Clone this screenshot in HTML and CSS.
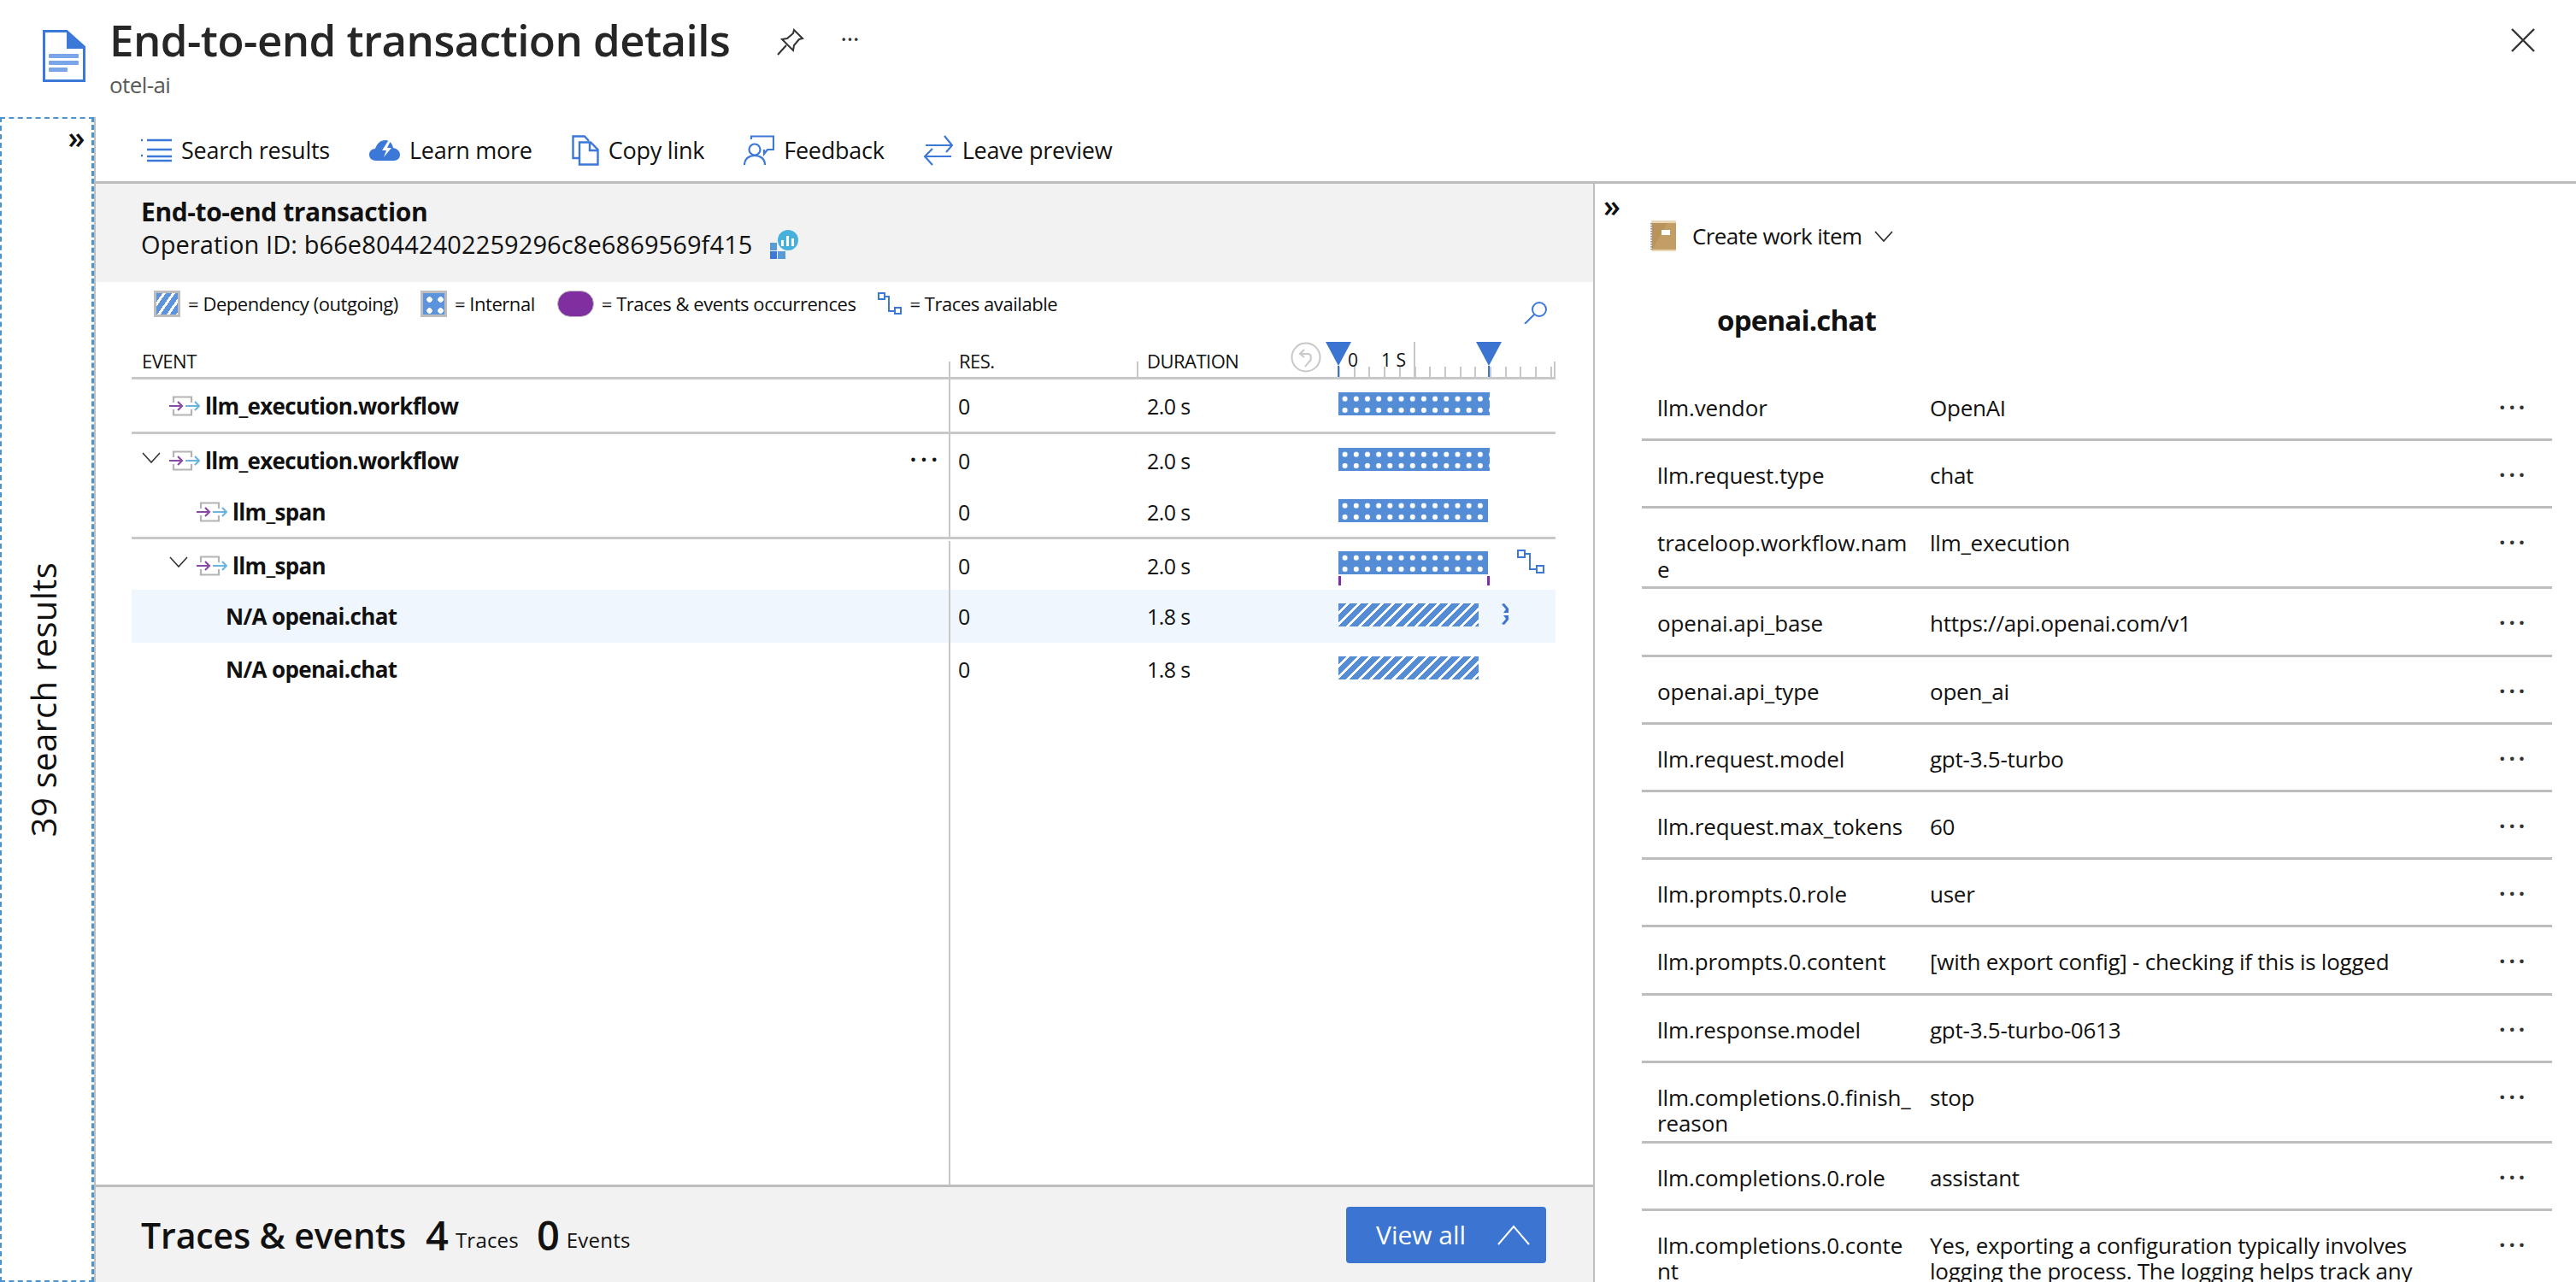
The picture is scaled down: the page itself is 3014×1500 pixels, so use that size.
FILE: index.html
```html
<!DOCTYPE html>
<html lang="en">
<head>
  <meta charset="UTF-8" />
  <title>End-to-end transaction details</title>
  <link rel="stylesheet" href="styles.css">
</head>
<body>
  <header class="blade-head">
    <svg class="doc-icon" width="50" height="61" viewBox="0 0 50 61">
      <path d="M1.5 1.5H28L48.5 20V59.5H1.5Z" fill="#fff" stroke="#3b78d8" stroke-width="3"/>
      <path d="M28 1.5L48.5 20V22H28Z" fill="#3b78d8"/>
      <rect x="7" y="28" width="35" height="5" rx="1" fill="#7aa5e8"/>
      <rect x="7" y="36" width="35" height="5" rx="1" fill="#7aa5e8"/>
      <rect x="7" y="44" width="22" height="5" rx="1" fill="#7aa5e8"/>
    </svg>
    <div class="blade-titles">
      <h1>End-to-end transaction details</h1>
      <p>otel-ai</p>
    </div>
    <svg class="pin-icon" width="32" height="32" viewBox="0 0 32 32" fill="none" stroke="#333" stroke-width="2">
      <path d="M20 2L30 12L26 13L20 20L19 26L6 13L12 12L19 6Z"/>
      <path d="M11 20L1 31"/>
    </svg>
    <span class="head-more">&middot;&middot;&middot;</span>
    <svg class="close-icon" width="30" height="30" viewBox="0 0 30 30" stroke="#333" stroke-width="2.4">
      <path d="M2 2L28 28M28 2L2 28"/>
    </svg>
  </header>

  <div class="blade-body">
    <aside class="results-rail">
      <span class="rail-toggle">&raquo;</span>
      <span class="rail-label">39 search results</span>
    </aside>

    <div class="blade-main">
      <nav class="toolbar">
        <a class="tool">
          <svg width="36" height="28" viewBox="0 0 36 28" fill="none" stroke="#3b78d8" stroke-width="2.4">
            <path d="M7 2H36M7 13H36M7 21H36M7 26H36"/>
            <path d="M0 2H2M0 20H2"/>
          </svg>
          Search results
        </a>
        <a class="tool">
          <svg width="36" height="26" viewBox="0 0 36 26">
            <path d="M8 25C2 25 0 21 0 18C0 14 3 11 7 11C9 5 13 1 19 1C24 1 27 5 28 10C33 11 36 14 36 18C36 22 33 25 29 25Z" fill="#3b78d8"/>
            <path d="M22 2L15 13H20L17 21L26 10H21L25 2Z" fill="#fff"/>
          </svg>
          Learn more
        </a>
        <a class="tool">
          <svg width="32" height="36" viewBox="0 0 32 36" fill="none" stroke="#3b78d8" stroke-width="2.4">
            <path d="M8 27H1.5V1.500H15L20 7"/>
            <path d="M9 8.500H22L30.500 17V34.500H9Z"/>
            <path d="M21 9V18H30"/>
          </svg>
          Copy link
        </a>
        <a class="tool">
          <svg width="36" height="36" viewBox="0 0 36 36" fill="none" stroke="#3b78d8" stroke-width="2.2">
            <path d="M9 5V1.500H35V17H28L24 22V17"/>
            <circle cx="13" cy="17" r="6.500"/>
            <path d="M1 35C1 28 6 24 13 24C20 24 25 28 25 35"/>
          </svg>
          Feedback
        </a>
        <a class="tool">
          <svg width="34" height="36" viewBox="0 0 34 36" fill="none" stroke="#3b78d8" stroke-width="2.2">
            <path d="M2 12H32M24 1L33 12L26 20"/>
            <path d="M32 25H2M10 16L1 25L10 35"/>
          </svg>
          Leave preview
        </a>
      </nav>

      <div class="split">
        <section class="txn-pane">
          <div class="txn-head">
            <h2>End-to-end transaction</h2>
            <div class="op-id">
              Operation ID: b66e80442402259296c8e6869569f415
              <svg width="34" height="34" viewBox="0 0 34 34">
                <rect x="0" y="15" width="8" height="9" fill="#5b9bd5"/>
                <rect x="0" y="25" width="8" height="9" fill="#3b78d8"/>
                <rect x="9" y="25" width="9" height="9" fill="#5b9bd5"/>
                <circle cx="21" cy="12" r="12" fill="#46b1dc"/>
                <rect x="13" y="12" width="3" height="7" fill="#fff"/>
                <rect x="19" y="7" width="3" height="12" fill="#fff"/>
                <rect x="25" y="10" width="3" height="9" fill="#fff"/>
              </svg>
            </div>
          </div>

          <div class="legend">
            <span class="swatch swatch-dep"></span>
            <span class="legend-text">= Dependency (outgoing)</span>
            <span class="swatch swatch-int"></span>
            <span class="legend-text">= Internal</span>
            <span class="swatch-pill"></span>
            <span class="legend-text">= Traces &amp; events occurrences</span>
            <svg class="legend-trace" width="28" height="26" viewBox="0 0 28 26" fill="none" stroke="#3b78d8" stroke-width="2">
              <rect x="1" y="1" width="7" height="7"/>
              <rect x="20" y="18" width="7" height="7"/>
              <path d="M8 5H13V22H20"/>
            </svg>
            <span class="legend-text">= Traces available</span>
            <svg class="legend-search" width="28" height="26" viewBox="0 0 28 26" fill="none" stroke="#3b78d8" stroke-width="2">
              <circle cx="18" cy="9" r="8"/>
              <path d="M12 15L1 26"/>
            </svg>
          </div>

          <div class="grid">
            <div class="grid-row grid-header">
              <div class="cell cell-event">EVENT</div>
              <div class="cell cell-res tick-left">RES.</div>
              <div class="cell cell-dur tick-left">DURATION
                <svg class="undo-icon" width="36" height="36" viewBox="0 0 36 36" fill="none" stroke="#c8c8c8" stroke-width="2">
                  <circle cx="18" cy="18" r="16.500"/>
                  <path d="M12 14H20C25 14 25 22 21 24L17 29M16 9L11 14L16 18"/>
                </svg>
              </div>
              <div class="ruler">
                <span class="ruler-major"></span>
                <span class="ruler-label label-zero">0</span>
                <span class="ruler-label label-one">1 S</span>
                <span class="handle handle-start"></span>
                <span class="handle handle-end"></span>
              </div>
            </div>

            <div class="grid-row row-a sep">
              <div class="cell cell-event indent-1">
                <svg class="span-icon" width="36" height="24" viewBox="0 0 36 24" fill="none" stroke-width="2.200"><path d="M5 8V1.500H26V8M5 16V22.500H26V16" stroke="#b4b4b4"/><path d="M0 12H15M10 7L15 12L10 17" stroke="#8a4aa8"/><path d="M19 12H35M30 7L35 12L30 17" stroke="#6cb4e0"/></svg>
                llm_execution.workflow
              </div>
              <div class="cell cell-res">0</div>
              <div class="cell cell-dur">2.0 s</div>
              <div class="cell-time"><span class="bar bar-internal bar-full"></span></div>
            </div>

            <div class="grid-row row-b">
              <div class="cell cell-event indent-1">
                <svg class="expander" width="22" height="13" viewBox="0 0 22 13" fill="none" stroke="#333" stroke-width="1.600"><path d="M1 1L11 12L21 1"/></svg>
                <svg class="span-icon" width="36" height="24" viewBox="0 0 36 24" fill="none" stroke-width="2.200"><path d="M5 8V1.500H26V8M5 16V22.500H26V16" stroke="#b4b4b4"/><path d="M0 12H15M10 7L15 12L10 17" stroke="#8a4aa8"/><path d="M19 12H35M30 7L35 12L30 17" stroke="#6cb4e0"/></svg>
                llm_execution.workflow
                <span class="row-more">&middot;&middot;&middot;</span>
              </div>
              <div class="cell cell-res">0</div>
              <div class="cell cell-dur">2.0 s</div>
              <div class="cell-time"><span class="bar bar-internal bar-full"></span></div>
            </div>

            <div class="grid-row row-c sep">
              <div class="cell cell-event indent-2">
                <svg class="span-icon" width="36" height="24" viewBox="0 0 36 24" fill="none" stroke-width="2.200"><path d="M5 8V1.500H26V8M5 16V22.500H26V16" stroke="#b4b4b4"/><path d="M0 12H15M10 7L15 12L10 17" stroke="#8a4aa8"/><path d="M19 12H35M30 7L35 12L30 17" stroke="#6cb4e0"/></svg>
                llm_span
              </div>
              <div class="cell cell-res">0</div>
              <div class="cell cell-dur">2.0 s</div>
              <div class="cell-time"><span class="bar bar-internal bar-span"></span></div>
            </div>

            <div class="grid-row row-d">
              <div class="cell cell-event indent-2">
                <svg class="expander" width="22" height="13" viewBox="0 0 22 13" fill="none" stroke="#333" stroke-width="1.600"><path d="M1 1L11 12L21 1"/></svg>
                <svg class="span-icon" width="36" height="24" viewBox="0 0 36 24" fill="none" stroke-width="2.200"><path d="M5 8V1.500H26V8M5 16V22.500H26V16" stroke="#b4b4b4"/><path d="M0 12H15M10 7L15 12L10 17" stroke="#8a4aa8"/><path d="M19 12H35M30 7L35 12L30 17" stroke="#6cb4e0"/></svg>
                llm_span
              </div>
              <div class="cell cell-res">0</div>
              <div class="cell cell-dur">2.0 s</div>
              <div class="cell-time">
                <span class="bar bar-internal bar-span">
                  <span class="occurrence occ-start"></span>
                  <span class="occurrence occ-end"></span>
                </span>
                <svg class="row-trace" width="32" height="28" viewBox="0 0 32 28" fill="none" stroke="#3b78d8" stroke-width="2">
                  <rect x="1" y="1" width="8" height="8"/>
                  <rect x="23" y="19" width="8" height="8"/>
                  <path d="M9 5H15V23H23"/>
                </svg>
              </div>
            </div>

            <div class="grid-row row-e row-selected">
              <div class="cell cell-event indent-3">N/A openai.chat</div>
              <div class="cell cell-res">0</div>
              <div class="cell cell-dur">1.8 s</div>
              <div class="cell-time">
                <span class="bar bar-dep"></span>
                <svg class="row-chevrons" width="9" height="26" viewBox="0 0 9 26" fill="#3b74d1">
                  <path d="M0 1L3 0L8 6V11H2L5 7ZM2 14H8V19L3 25L0 24L5 18Z"/>
                </svg>
              </div>
            </div>

            <div class="grid-row row-f">
              <div class="cell cell-event indent-3">N/A openai.chat</div>
              <div class="cell cell-res">0</div>
              <div class="cell cell-dur">1.8 s</div>
              <div class="cell-time"><span class="bar bar-dep"></span></div>
            </div>

            <div class="grid-row grid-filler">
              <div class="cell"></div>
              <div class="cell cell-res"></div>
            </div>
          </div>

          <footer class="traces-bar">
            <span class="traces-title">Traces &amp; events</span>
            <span class="traces-count">4</span><span class="traces-unit">Traces</span>
            <span class="traces-count">0</span><span class="traces-unit">Events</span>
            <button class="view-all">View all
              <svg width="38" height="24" viewBox="0 0 38 24" fill="none" stroke="#fff" stroke-width="2"><path d="M1 23L19 2L37 23"/></svg>
            </button>
          </footer>
        </section>

        <section class="props-pane">
          <span class="pane-toggle">&raquo;</span>
          <div class="work-item">
            <svg width="30" height="36" viewBox="0 0 30 36">
              <rect x="1" y="0" width="29" height="36" rx="1" fill="#e8d6b4"/>
              <rect x="2" y="3" width="28" height="31" fill="#b99359"/>
              <path d="M2 34L20 3H30V34Z" fill="#c29e66"/>
              <path d="M1.500 3V34" stroke="#999" stroke-width="3" stroke-dasharray="1.500 1.500"/>
              <rect x="13" y="11" width="10" height="6" fill="#fff"/>
            </svg>
            Create work item
            <svg width="22" height="13" viewBox="0 0 22 13" fill="none" stroke="#333" stroke-width="1.800"><path d="M1 1L11 12L21 1"/></svg>
          </div>
          <h3>openai.chat</h3>
          <div class="prop-list">
            <div class="prop"><div class="prop-key">llm.vendor</div><div class="prop-val">OpenAI</div><div class="prop-more">&middot;&middot;&middot;</div></div>
            <div class="prop"><div class="prop-key">llm.request.type</div><div class="prop-val">chat</div><div class="prop-more">&middot;&middot;&middot;</div></div>
            <div class="prop"><div class="prop-key">traceloop.workflow.nam<br>e</div><div class="prop-val">llm_execution</div><div class="prop-more">&middot;&middot;&middot;</div></div>
            <div class="prop"><div class="prop-key">openai.api_base</div><div class="prop-val">https://api.openai.com/v1</div><div class="prop-more">&middot;&middot;&middot;</div></div>
            <div class="prop"><div class="prop-key">openai.api_type</div><div class="prop-val">open_ai</div><div class="prop-more">&middot;&middot;&middot;</div></div>
            <div class="prop"><div class="prop-key">llm.request.model</div><div class="prop-val">gpt-3.5-turbo</div><div class="prop-more">&middot;&middot;&middot;</div></div>
            <div class="prop"><div class="prop-key">llm.request.max_tokens</div><div class="prop-val">60</div><div class="prop-more">&middot;&middot;&middot;</div></div>
            <div class="prop"><div class="prop-key">llm.prompts.0.role</div><div class="prop-val">user</div><div class="prop-more">&middot;&middot;&middot;</div></div>
            <div class="prop"><div class="prop-key">llm.prompts.0.content</div><div class="prop-val">[with export config] - checking if this is logged</div><div class="prop-more">&middot;&middot;&middot;</div></div>
            <div class="prop"><div class="prop-key">llm.response.model</div><div class="prop-val">gpt-3.5-turbo-0613</div><div class="prop-more">&middot;&middot;&middot;</div></div>
            <div class="prop"><div class="prop-key">llm.completions.0.finish_<br>reason</div><div class="prop-val">stop</div><div class="prop-more">&middot;&middot;&middot;</div></div>
            <div class="prop"><div class="prop-key">llm.completions.0.role</div><div class="prop-val">assistant</div><div class="prop-more">&middot;&middot;&middot;</div></div>
            <div class="prop"><div class="prop-key">llm.completions.0.conte<br>nt</div><div class="prop-val">Yes, exporting a configuration typically involves logging the process. The logging helps track any</div><div class="prop-more">&middot;&middot;&middot;</div></div>
          </div>
        </section>
      </div>
    </div>
  </div>
</body>
</html>
```

FILE: styles.css
```css
* { box-sizing: border-box; }
html, body { height: 100%; }
body {
  margin: 0;
  height: 100vh;
  overflow: hidden;
  display: flex;
  flex-direction: column;
  font-family: "Open Sans", "Noto Sans", sans-serif;
  font-size: 26px;
  letter-spacing: -0.6px;
  color: #111;
  background: #fff;
}

/* blade header */
.blade-head {
  height: 137px;
  flex: none;
  display: flex;
  align-items: flex-start;
  padding-left: 50px;
  position: relative;
}
.doc-icon { margin-top: 35px; margin-right: 28px; }
.blade-titles h1 {
  margin: 16px 0 0;
  font-size: 51px;
  line-height: 60px;
  font-weight: 600;
  letter-spacing: -0.55px;
  color: #262626;
}
.blade-titles p {
  margin: 8px 0 0;
  font-size: 26px;
  line-height: 30px;
  color: #595959;
}
.pin-icon { margin: 33px 0 0 55px; }
.head-more { margin: 30px 0 0 42px; font-size: 30px; line-height: 30px; color: #333; }
.close-icon { position: absolute; top: 32px; right: 47px; }

.blade-body { flex: 1; display: flex; min-height: 0; }

/* collapsed search results */
.results-rail {
  width: 110px;
  flex: none;
  border: 2px dashed #4a94cf;
  border-right-width: 3px;
  position: relative;
  display: flex;
  align-items: center;
  justify-content: center;
  box-shadow: 2px 0 0 #bdbdbd;
}
.rail-toggle {
  position: absolute;
  top: 4px;
  right: 8px;
  font-size: 36px;
  line-height: 36px;
  font-weight: 600;
  color: #111;
}
.rail-label {
  writing-mode: vertical-rl;
  transform: rotate(180deg);
  font-size: 40px;
  letter-spacing: 0.3px;
  margin-right: 8px;
}

.blade-main { flex: 1; display: flex; flex-direction: column; min-width: 0; }

/* toolbar */
.toolbar {
  height: 78px;
  flex: none;
  display: flex;
  align-items: center;
  gap: 46px;
  padding: 2px 0 0 55px;
  border-bottom: 3px solid #bdbdbd;
}
.tool {
  display: flex;
  align-items: center;
  gap: 11px;
  font-size: 27px;
  letter-spacing: -0.25px;
  color: #111;
}

.split { flex: 1; display: flex; min-height: 0; }

/* transaction pane */
.txn-pane {
  width: 1754px;
  flex: none;
  display: flex;
  flex-direction: column;
}
.txn-head {
  height: 115px;
  flex: none;
  background: #f2f2f2;
  padding: 14px 0 0 55px;
}
.txn-head h2 {
  margin: 0;
  font-size: 30px;
  line-height: 38px;
  font-weight: 700;
  letter-spacing: -0.4px;
  color: #111;
}
.op-id {
  display: flex;
  align-items: center;
  gap: 20px;
  font-size: 29px;
  letter-spacing: 0.1px;
  line-height: 38px;
}

.legend {
  height: 70px;
  flex: none;
  display: flex;
  align-items: center;
  padding: 0 53px 20px 70px;
}
.legend-text { font-size: 22px; letter-spacing: -0.45px; margin: 0 26px 0 9px; white-space: nowrap; }
.swatch { width: 31px; height: 31px; border: 3px solid #bdbdbd; flex: none; }
.swatch-dep {
  background: repeating-linear-gradient(125deg, #5b94dc 0 6px, #fff 6px 9px);
}
.swatch-int {
  background-color: #5b94dc;
  background-image: radial-gradient(circle at center, #fff 3px, transparent 3.5px);
  background-size: 13px 13px;
  background-position: 1px 1px;
}
.swatch-pill {
  width: 43px;
  height: 31px;
  flex: none;
  border-radius: 16px;
  background: #7f2f9f;
  border: 1px solid #bdbdbd;
}
.legend-trace { flex: none; }
.legend-search { margin: 22px 0 0 auto; }

/* event grid */
.grid {
  flex: 1;
  display: flex;
  flex-direction: column;
  margin: 0 44px;
  min-height: 0;
}
.grid-row {
  display: grid;
  grid-template-columns: 956px 220px 236px 254px;
  flex: none;
  font-size: 25px;
}
.cell { display: flex; align-items: center; padding-left: 12px; white-space: nowrap; }
.cell-res { border-left: 2px solid #c8c8c8; padding-left: 9px; }
.cell-event { font-weight: 700; font-size: 26px; letter-spacing: -0.65px; color: #111; position: relative; }
.sep { border-bottom: 3px solid #c8c8c8; }
.row-a { height: 64px; }
.row-b { height: 62px; }
.row-c { height: 61px; }
.row-d { height: 59px; padding-top: 2px; }
.row-d .cell-time { padding-bottom: 6px; }
.row-e { height: 62px; }
.row-f { height: 62px; }
.row-selected { background: #eff6fe; }
.grid-filler { flex: 1; grid-template-rows: 1fr; }
.grid-filler .cell-res { height: 100%; }

.grid-header {
  height: 44px;
  border-bottom: 3px solid #c8c8c8;
  position: relative;
}
.grid-header .cell {
  font-size: 22px;
  font-weight: 400;
  letter-spacing: -0.5px;
  padding-top: 3px;
  position: relative;
}
.grid-header .cell-res { border-left: 0; padding-left: 12px; }
.tick-left::before {
  content: "";
  position: absolute;
  left: 0;
  bottom: 0;
  height: 18px;
  border-left: 2px solid #c8c8c8;
}
.undo-icon { position: absolute; left: 180px; top: 0; }

.ruler {
  position: relative;
  background: repeating-linear-gradient(90deg, #c8c8c8 0 2px, transparent 2px 17.7px) left bottom / 100% 12px no-repeat;
}
.ruler::after {
  content: "";
  position: absolute;
  right: 0;
  bottom: 0;
  height: 18px;
  border-left: 2px solid #c8c8c8;
}
.ruler-major {
  position: absolute;
  left: 88px;
  top: 0;
  bottom: 0;
  border-left: 2px solid #c8c8c8;
}
.ruler-label { position: absolute; top: 9px; font-size: 21px; line-height: 24px; letter-spacing: 0; }
.label-zero { left: 11px; }
.label-one { left: 50px; }
.handle {
  position: absolute;
  top: 0;
  width: 0;
  height: 28px;
  border-left: 15px solid transparent;
  border-right: 15px solid transparent;
  border-top: 28px solid #3b74d1;
}
.handle::after {
  content: "";
  position: absolute;
  top: 0;
  left: -1px;
  height: 13px;
  border-left: 2px solid #3b74d1;
}
.handle-start { left: -15px; }
.handle-end { left: 161px; }

.indent-1 { padding-left: 12px; }
.indent-2 { padding-left: 44px; }
.indent-3 { padding-left: 110px; }
.span-icon { flex: none; margin-right: 6px; }
.indent-1 .span-icon:first-child { margin-left: 32px; }
.indent-2 .span-icon:first-child { margin-left: 32px; }
.expander { flex: none; margin-right: 10px; margin-top: -8px; }
.row-more {
  position: absolute;
  right: 8px;
  top: 14px;
  font-size: 26px;
  font-weight: 700;
  letter-spacing: 5px;
  line-height: 30px;
}

/* timeline bars */
.cell-time { display: flex; align-items: center; padding-bottom: 4px; position: relative; }
.bar { display: block; height: 27px; position: relative; flex: none; }
.bar-full { width: 177px; }
.bar-span { width: 175px; }
.bar-internal {
  background-color: #548dd6;
  background-image: radial-gradient(circle at center, #fff 2.8px, transparent 3.4px);
  background-size: 13.2px 13.3px;
  background-position: 1px 1px;
}
.bar-dep {
  width: 164px;
  background: repeating-linear-gradient(135deg, #548dd6 0 6.500px, #fff 6.500px 9.400px);
}
.occurrence {
  position: absolute;
  top: 29px;
  width: 3px;
  height: 11px;
  background: #7f2f9f;
}
.occ-start { left: 0; }
.occ-end { right: -2px; }
.row-trace { margin-left: 34px; margin-top: -4px; }
.row-chevrons { margin-left: 27px; }

/* traces footer */
.traces-bar {
  height: 114px;
  flex: none;
  display: flex;
  align-items: center;
  padding: 0 55px;
  background: #f2f2f2;
  border-top: 3px solid #bdbdbd;
}
.traces-title { font-size: 41px; font-weight: 600; letter-spacing: -0.1px; margin-right: 23px; color: #111; }
.traces-count { font-size: 47px; font-weight: 600; letter-spacing: 0; margin-right: 8px; line-height: 50px; }
.traces-unit { font-size: 24px; letter-spacing: 0.2px; margin-right: 21px; margin-top: 12px; }
.view-all {
  margin-left: auto;
  width: 234px;
  height: 66px;
  border: 0;
  border-radius: 4px;
  background: #3b74d1;
  color: #fff;
  font: inherit;
  font-size: 30px;
  letter-spacing: 0;
  display: flex;
  align-items: center;
  justify-content: space-between;
  padding: 0 19px 0 35px;
}

/* properties pane */
.props-pane {
  flex: 1;
  min-width: 0;
  border-left: 2px solid #bdbdbd;
  overflow: hidden;
  padding: 0 28px 0 55px;
  position: relative;
}
.pane-toggle {
  position: absolute;
  left: 10px;
  top: 8px;
  font-size: 36px;
  line-height: 36px;
  font-weight: 600;
}
.work-item {
  display: flex;
  align-items: center;
  gap: 19px;
  margin: 43px 0 0 10px;
  height: 36px;
  font-size: 26px;
}
.work-item svg:last-child { margin-left: -4px; }
.props-pane h3 {
  margin: 58px 0 0 88px;
  font-size: 33px;
  line-height: 46px;
  font-weight: 700;
  letter-spacing: -0.8px;
  color: #111;
}
.prop-list { margin-top: 39px; }
.prop {
  display: flex;
  min-height: 79.2px;
  padding: 25px 0 5px 18px;
  border-bottom: 3px solid #bdbdbd;
  line-height: 30.5px;
  font-size: 26px;
  letter-spacing: -0.25px;
}
.prop-key { width: 319px; flex: none; letter-spacing: -0.1px; white-space: nowrap; }
.prop-val { width: 590px; flex: none; }
.prop-more { margin-left: 76px; font-size: 26px; font-weight: 700; letter-spacing: 4px; line-height: 28px; color: #333; }
```
